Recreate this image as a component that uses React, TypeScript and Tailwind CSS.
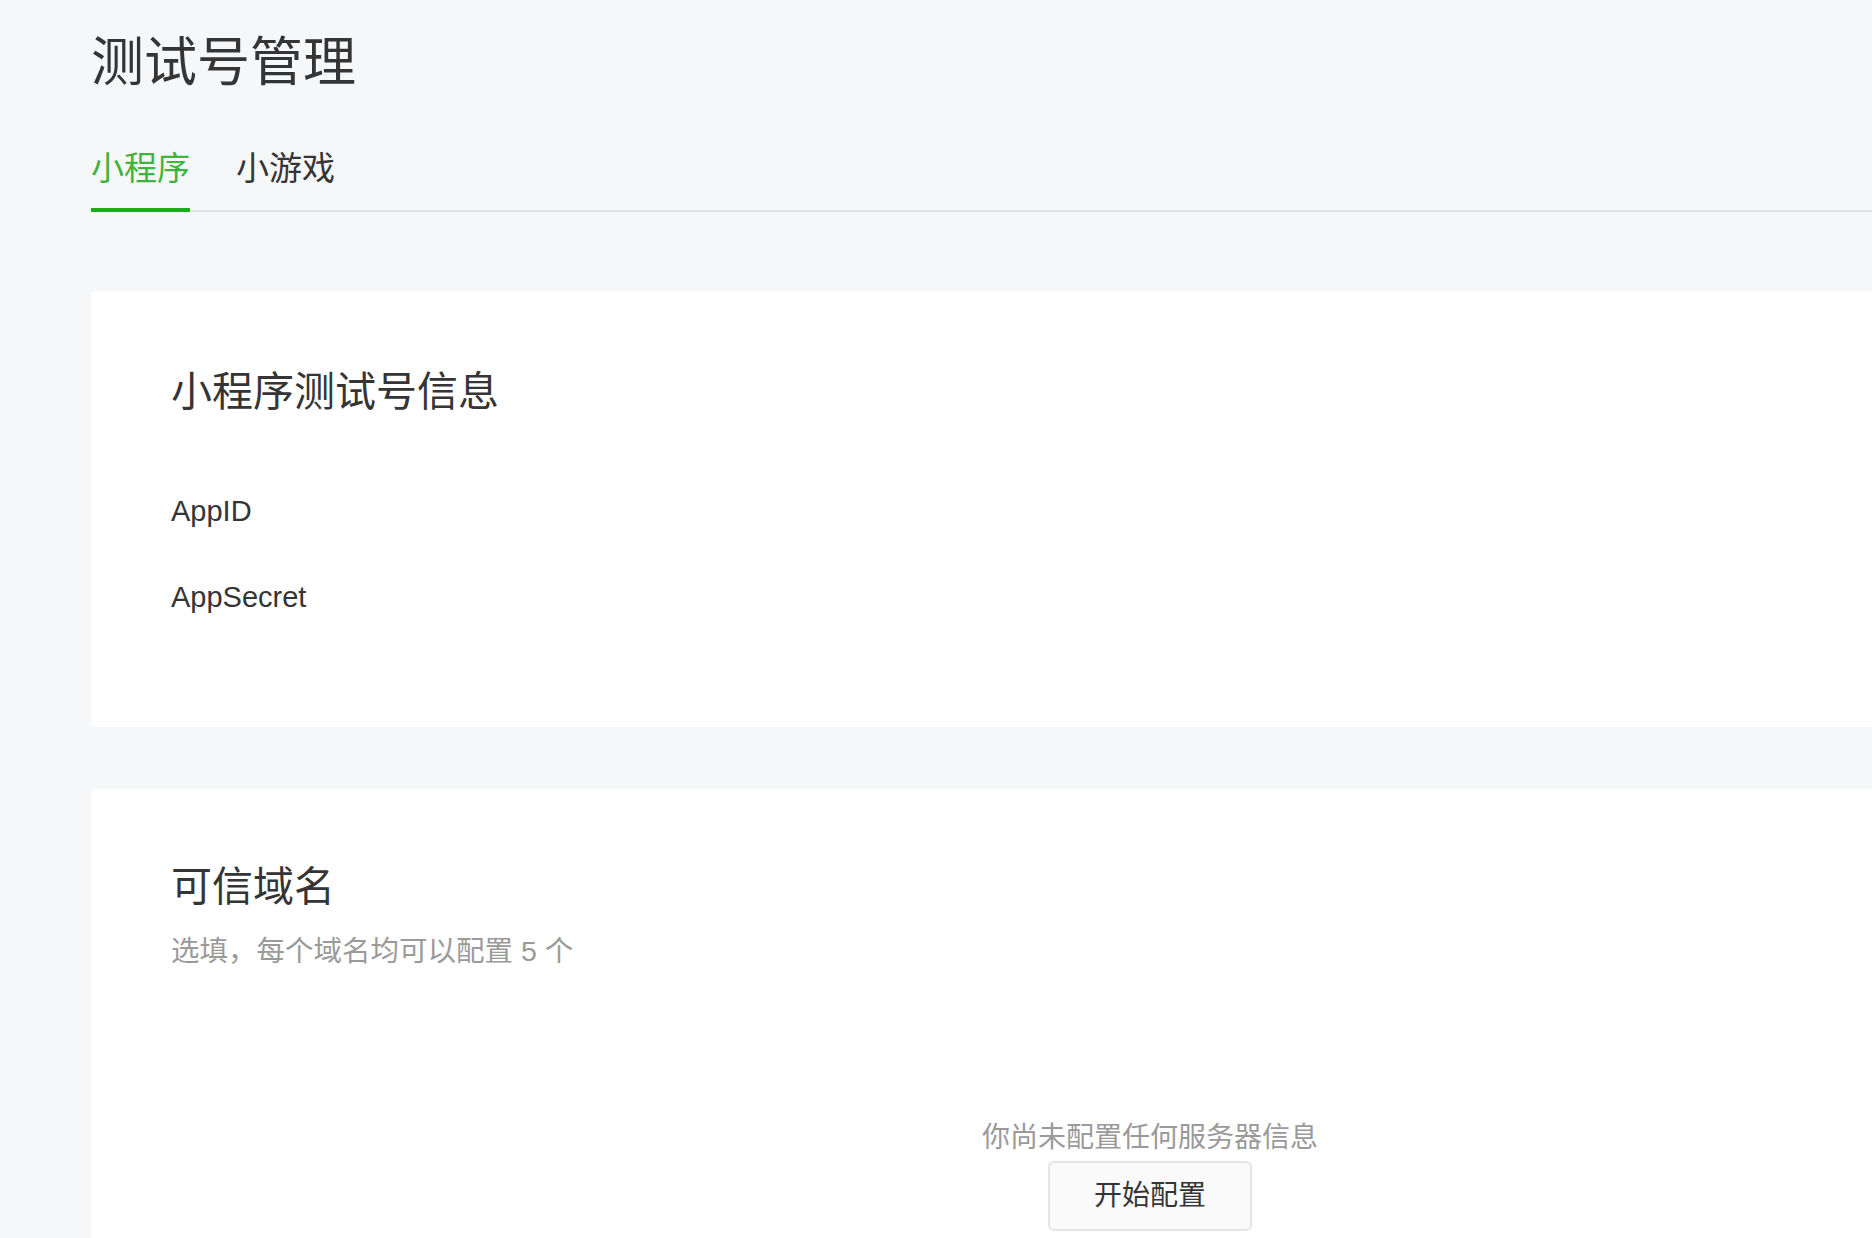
import { useState } from "react";

// test account page - mini program / mini game tabs
const FONT = "[font-family:'Liberation_Sans','Noto_Sans_CJK_SC',sans-serif]";

export default function App() {
  const [tab, setTab] = useState("mp");

  const tabs = [
    { key: "mp", label: "小程序" },
    { key: "game", label: "小游戏" },
  ];

  return (
    <div className={`w-[1872px] h-[1238px] overflow-hidden bg-[#f6f7f9] text-[#353535] ${FONT}`}>
      <div className="pl-[91px] w-[2209px]">
        <h1 className="mt-[27px] text-[53px] leading-[72px] font-normal">测试号管理</h1>

        {/* tab bar */}
        <div className="mt-[48px] flex gap-[46px] border-b-2 border-[#e0e1e3]">
          {tabs.map((t) => (
            <button
              key={t.key}
              type="button"
              onClick={() => setTab(t.key)}
              className={`-mb-[2px] pb-[17px] border-b-4 text-[33px] leading-[44px] ${
                tab === t.key ? "border-[#1aad19] text-[#3fb33f]" : "border-transparent text-[#353535]"
              }`}
            >
              {t.label}
            </button>
          ))}
        </div>

        {/* info card */}
        <div className="mt-[79px] bg-white rounded-[4px] pl-[80px] pr-[80px] pt-[73px] pb-[110px]">
          <h2 className="text-[41px] leading-[56px] font-normal">小程序测试号信息</h2>
          <div className="mt-[71px] flex flex-col gap-[46px] text-[29px] leading-[40px]">
            <div>AppID</div>
            <div>AppSecret</div>
          </div>
        </div>

        {/* domain card */}
        <div className="mt-[62px] bg-white rounded-[4px] px-[80px] pt-[70px] pb-[120px]">
          <h2 className="text-[41px] leading-[56px] font-normal">可信域名</h2>
          <p className="mt-[16px] text-[28.5px] leading-[40px] text-[#9a9a9a]">选填，每个域名均可以配置 5 个</p>
          <div className="mt-[147px] flex flex-col items-center">
            <p className="text-[28px] leading-[40px] text-[#9a9a9a]">你尚未配置任何服务器信息</p>
            <button
              type="button"
              className="mt-[3px] w-[204px] h-[70px] rounded-[6px] border-2 border-[#e3e5e8] bg-[#fafafa] text-[28px] text-[#353535]"
            >
              开始配置
            </button>
          </div>
        </div>
      </div>
    </div>
  );
}
